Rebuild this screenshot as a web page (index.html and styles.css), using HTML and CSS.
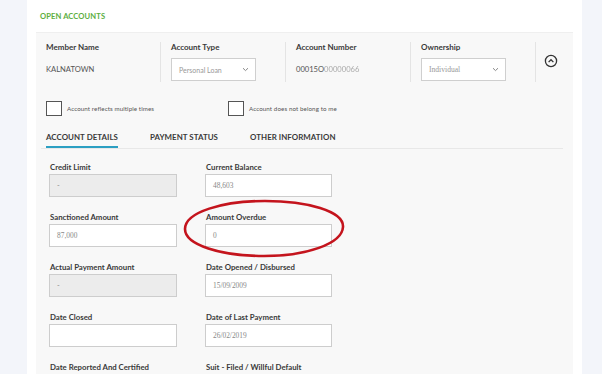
FILE: index.html
```html
<html>
    <head>
        <link rel="stylesheet" href="styles.css">
    </head>
    <body>
        <div class="page">
            <div class="card">
                <div class="card-title">OPEN ACCOUNTS</div>
                <div class="panel">
                    <div class="summary">
                        <div class="col">
                            <div class="head">Member Name</div>
                            <div class="value">KALNATOWN</div>
                        </div>
                        <div class="col">
                            <div class="head">Account Type</div>
                            <div class="select">
                                <span>Personal Loan</span>
                                <svg width="7" height="5" viewBox="0 0 7 5"><path d="M1 1.2 L3.5 3.6 L6 1.2" fill="none" stroke="#888" stroke-width="1"/></svg>
                            </div>
                        </div>
                        <div class="col">
                            <div class="head">Account Number</div>
                            <div class="value">00015O<span class="masked">00000066</span></div>
                        </div>
                        <div class="col">
                            <div class="head">Ownership</div>
                            <div class="select serif">
                                <span>Individual</span>
                                <svg width="7" height="5" viewBox="0 0 7 5"><path d="M1 1.2 L3.5 3.6 L6 1.2" fill="none" stroke="#888" stroke-width="1"/></svg>
                            </div>
                        </div>
                        <div class="col last">
                            <svg class="toggle" width="14" height="14" viewBox="0 0 14 14"><circle cx="7" cy="7" r="5.6" fill="none" stroke="#333" stroke-width="1.3"/><path d="M4.6 8.1 L7 5.7 L9.4 8.1" fill="none" stroke="#333" stroke-width="1.3"/></svg>
                        </div>
                    </div>

                    <div class="flags">
                        <label class="flag"><span class="box"></span>Account reflects multiple times</label>
                        <label class="flag"><span class="box"></span>Account does not belong to me</label>
                    </div>

                    <div class="tabs">
                        <div class="tab active">ACCOUNT DETAILS</div>
                        <div class="tab">PAYMENT STATUS</div>
                        <div class="tab">OTHER INFORMATION</div>
                    </div>

                    <div class="fields">
                        <div class="field">
                            <div class="label">Credit Limit</div>
                            <div class="input disabled">-</div>
                        </div>
                        <div class="field">
                            <div class="label">Current Balance</div>
                            <div class="input">48,603</div>
                        </div>
                        <div class="field">
                            <div class="label">Sanctioned Amount</div>
                            <div class="input">87,000</div>
                        </div>
                        <div class="field marked">
                            <div class="label">Amount Overdue</div>
                            <div class="input">0</div>
                            <svg class="circle-mark" width="166" height="62" viewBox="0 0 166 62"><path d="M4 31 C4 14 42 3 84 3 C126 3 163 13 162 29 C161 46 125 58 83 58 C40 58 4 47 4 31 Z" fill="none" stroke="#c4141d" stroke-width="2.6"/></svg>
                        </div>
                        <div class="field">
                            <div class="label">Actual Payment Amount</div>
                            <div class="input disabled">-</div>
                        </div>
                        <div class="field">
                            <div class="label">Date Opened / Disbursed</div>
                            <div class="input">15/09/2009</div>
                        </div>
                        <div class="field">
                            <div class="label">Date Closed</div>
                            <div class="input"></div>
                        </div>
                        <div class="field">
                            <div class="label">Date of Last Payment</div>
                            <div class="input">26/02/2019</div>
                        </div>
                        <div class="field">
                            <div class="label">Date Reported And Certified</div>
                            <div class="input"></div>
                        </div>
                        <div class="field">
                            <div class="label">Suit - Filed / Willful Default</div>
                            <div class="input"></div>
                        </div>
                    </div>
                </div>
            </div>
        </div>
    </body>
</html>
```

FILE: styles.css
```css
:root {
    --c-bg: #f3f5fa;
    --c-card: #ffffff;
    --c-panel: #f8f8f8;
    --c-text: #333333;
    --c-muted: #8a8a8a;
    --c-line: #e2e2e2;
    --c-green: #5cae3e;
    --c-tab: #2c9fc2;
    --f-sans: "Lato", "Noto Sans", sans-serif;
    --f-serif: "Liberation Serif", "DejaVu Serif", serif;
}

html, body {
    margin: 0;
    padding: 0;
}

body {
    background-color: var(--c-bg);
    font-family: var(--f-sans);
    color: var(--c-text);
}

.page {
    height: 374px;
    padding-left: 27px;
    overflow: hidden;
}

.card {
    width: 555px;
    height: 100%;
    background-color: var(--c-card);
    padding: 11px 9px 0 9px;
    box-sizing: border-box;
    display: flex;
    flex-direction: column;
}

.card-title {
    font-size: 7.6px;
    line-height: 10px;
    font-weight: 700;
    color: var(--c-green);
    padding-left: 4px;
    margin-bottom: 11px;
    letter-spacing: 0.1px;
}

.panel {
    flex-grow: 1;
    background-color: var(--c-panel);
    border-top: 1px solid #efefef;
    padding-top: 9px;
    overflow: hidden;
}

/* header row */
.summary {
    display: grid;
    grid-template-columns: 125px 125px 125px 125px 1fr;
}
.summary .col {
    height: 40px;
    padding-left: 10px;
    border-right: 1px solid #e4e4e4;
}
.summary .col.last {
    border-right: none;
    padding-left: 8px;
    display: flex;
    align-items: center;
}
.summary .head {
    font-size: 8px;
    line-height: 10px;
    font-weight: 700;
    color: #3a3a3a;
    margin-bottom: 6px;
}
.summary .value {
    font-size: 7.6px;
    line-height: 23px;
    color: #555;
}
.summary .masked {
    color: #aaa;
    filter: blur(0.5px);
}
.select {
    width: 85px;
    height: 23px;
    box-sizing: border-box;
    border: 1px solid #cfcfcf;
    background-color: #fff;
    display: flex;
    align-items: center;
    justify-content: space-between;
    padding: 0 6px 0 7px;
    font-size: 7px;
    color: #999;
}
.select.serif {
    font-family: var(--f-serif);
    font-size: 7.6px;
}
.toggle {
    margin-top: -2px;
}

/* checkboxes */
.flags {
    display: flex;
    margin-top: 19px;
    padding-left: 10px;
}
.flag {
    display: flex;
    align-items: center;
    font-size: 6.2px;
    letter-spacing: 0.1px;
    color: #555;
}
.flag:first-child {
    width: 182px;
}
.flag .box {
    width: 16px;
    height: 15px;
    box-sizing: border-box;
    border: 1px solid #555;
    background-color: #fff;
    margin-right: 5px;
}

/* tabs */
.tabs {
    display: flex;
    gap: 32px;
    margin: 16px 10px 0 5px;
    padding-left: 5px;
    border-bottom: 1px solid #e8e8e8;
}
.tab {
    font-size: 7.9px;
    line-height: 10px;
    font-weight: 700;
    letter-spacing: 0.05px;
    color: #3a3a3a;
    padding-bottom: 4px;
    border-bottom: 2px solid transparent;
}
.tab.active {
    border-bottom-color: var(--c-tab);
}

/* form fields */
.fields {
    display: grid;
    grid-template-columns: 128px 127px;
    column-gap: 28px;
    margin-top: 13px;
    padding-left: 13px;
}
.field {
    height: 50px;
    position: relative;
}
.field .label {
    font-size: 7.8px;
    line-height: 10px;
    font-weight: 700;
    color: #3a3a3a;
    padding-left: 1px;
    margin-bottom: 2px;
}
.field .input {
    height: 23px;
    box-sizing: border-box;
    border: 1px solid #cdcdcd;
    background-color: #fff;
    font-family: var(--f-serif);
    font-size: 7.4px;
    line-height: 21px;
    color: #888;
    padding-left: 7px;
}
.field .input.disabled {
    background-color: #ececec;
    font-family: var(--f-sans);
}
.circle-mark {
    position: absolute;
    left: -24px;
    top: -14px;
}
```
